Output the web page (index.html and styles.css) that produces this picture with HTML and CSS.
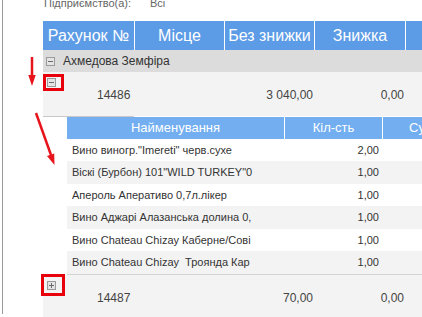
FILE: index.html
```html
<!DOCTYPE html>
<html lang="uk">
<head>
<meta charset="utf-8">
<title>Рахунки</title>
<link rel="stylesheet" href="styles.css">
</head>
<body>
<div class="page">
  <div class="filter"><span class="lbl">Підприємство(а):</span><span>Всі</span></div>
  <div class="thead">
    <div class="th">Рахунок №</div>
    <div class="th">Місце</div>
    <div class="th">Без знижки</div>
    <div class="th">Знижка</div>
    <div class="th"></div>
  </div>
  <div class="group">
    <svg class="tg" width="9" height="9" viewBox="0 0 9 9"><rect x="0.5" y="0.5" width="8" height="8" fill="#e4e4e4" stroke="#9a9a9a"/><path d="M2 4.5h5" stroke="#6a6a6a"/></svg>
    <span>Ахмедова Земфіра</span>
  </div>
  <div class="row">
    <div class="c1">
      <svg class="tg" width="9" height="9" viewBox="0 0 9 9"><rect x="0.5" y="0.5" width="8" height="8" fill="#e4e4e4" stroke="#9a9a9a"/><path d="M2 4.5h5" stroke="#6a6a6a"/></svg>
      <span class="num">14486</span>
    </div>
    <div></div>
    <div class="r">3 040,00</div>
    <div class="r">0,00</div>
    <div></div>
  </div>
  <div class="sep"></div>
  <div class="detail">
    <div class="dhead">
      <div>Найменування</div>
      <div>Кіл-сть</div>
      <div>Сума</div>
    </div>
    <div class="drow"><div class="name">Вино виногр."Imereti" черв.сухе</div><div class="qty">2,00</div><div></div></div>
    <div class="drow alt"><div class="name">Віскі (Бурбон) 101"WILD TURKEY"0</div><div class="qty">1,00</div><div></div></div>
    <div class="drow"><div class="name">Апероль Аперативо 0,7л.лікер</div><div class="qty">1,00</div><div></div></div>
    <div class="drow alt"><div class="name">Вино Аджарі Алазанська долина 0,</div><div class="qty">1,00</div><div></div></div>
    <div class="drow"><div class="name">Вино Chateau Chizay Каберне/Сові</div><div class="qty">1,00</div><div></div></div>
    <div class="drow alt"><div class="name">Вино Chateau Chizay&nbsp; Троянда Кар</div><div class="qty">1,00</div><div></div></div>
  </div>
  <div class="row">
    <div class="c1">
      <svg class="tg" width="9" height="9" viewBox="0 0 9 9"><rect x="0.5" y="0.5" width="8" height="8" fill="#e4e4e4" stroke="#9a9a9a"/><path d="M2 4.5h5M4.5 2v5" stroke="#6a6a6a"/></svg>
      <span class="num">14487</span>
    </div>
    <div></div>
    <div class="r">70,00</div>
    <div class="r">0,00</div>
    <div></div>
  </div>
</div>
<div class="mark mark1"></div>
<div class="mark mark2"></div>
<svg class="arrows" width="422" height="317" viewBox="0 0 422 317">
  <path d="M32 57V77" stroke="#e8141b" stroke-width="2.5" fill="none"/>
  <path d="M28.3 75L35.7 75L32 86Z" fill="#e8141b"/>
  <path d="M36 113L51 155" stroke="#e8141b" stroke-width="2.5" fill="none"/>
  <path d="M47 156L54.2 153.4L54.5 165Z" fill="#e8141b"/>
</svg>
</body>
</html>
```

FILE: styles.css
```css
html, body {
  margin: 0;
  width: 422px;
  height: 317px;
  overflow: hidden;
}
body {
  position: relative;
  font-family: "Liberation Sans", Arial, sans-serif;
  background: #fff;
}
.page {
  margin-left: 2px;
  border-left: 1px solid #9a9a9a;
  padding-left: 40px;
  height: 317px;
  box-sizing: border-box;
}
.filter {
  margin-top: -3px;
  height: 13px;
  font-size: 11px;
  line-height: 13px;
  color: #666;
  display: flex;
  padding-left: 1px;
}
.filter .lbl { width: 106px; }
.thead {
  margin-top: 11px;
  display: grid;
  grid-template-columns: 92px 90px 90px 91px 1fr;
  height: 29px;
  background: #5c9be6;
}
.th {
  border-right: 1px solid #fff;
  color: #fff;
  font-size: 16px;
  line-height: 29px;
  text-align: center;
  white-space: nowrap;
  overflow: hidden;
}
.th:last-child { border-right: 0; }
.group {
  height: 22px;
  background: #dcdcdc;
  display: flex;
  align-items: center;
  padding-left: 3px;
  gap: 8px;
  font-size: 12px;
  color: #333;
}
.tg { display: block; flex: none; }
.row {
  display: grid;
  grid-template-columns: 92px 90px 90px 91px 1fr;
  height: 44px;
  background: #f3f3f3;
  font-size: 12px;
  line-height: 14px;
  color: #444;
}
.row > div { padding-top: 16px; }
.row > .c1 { padding: 6px 0 0 4px; }
.c1 .num { display: block; margin-top: 1px; padding-left: 50px; }
.r { text-align: right; padding-right: 2px; }
.sep { width: 91px; height: 1px; background: #c8c8c8; }
.detail {
  margin-left: 24px;
  width: 400px;
  border-bottom: 1px solid #d4d4d4;
}
.dhead {
  display: grid;
  grid-template-columns: 218px 98px 1fr;
  height: 22px;
  background: #72aef0;
  color: #fff;
  font-size: 13px;
  line-height: 22px;
}
.dhead div {
  text-align: center;
  border-right: 1px solid #fff;
  white-space: nowrap;
}
.dhead div:last-child { border-right: 0; }
.drow {
  display: grid;
  grid-template-columns: 218px 98px 1fr;
  height: 22px;
  font-size: 11px;
  line-height: 22px;
  color: #333;
}
.drow.alt { background: #f3f3f3; height: 23px; line-height: 23px; }
.drow .name { padding-left: 5px; white-space: nowrap; overflow: hidden; }
.drow .qty { text-align: right; padding-right: 3px; border-right: 1px solid transparent; }
.mark {
  position: absolute;
  border: 3px solid #e8000b;
  box-sizing: border-box;
}
.mark1 { left: 43px; top: 74px; width: 21px; height: 17px; }
.mark2 { left: 41px; top: 274px; width: 24px; height: 22px; }
.arrows {
  position: absolute;
  left: 0;
  top: 0;
  pointer-events: none;
}
```
